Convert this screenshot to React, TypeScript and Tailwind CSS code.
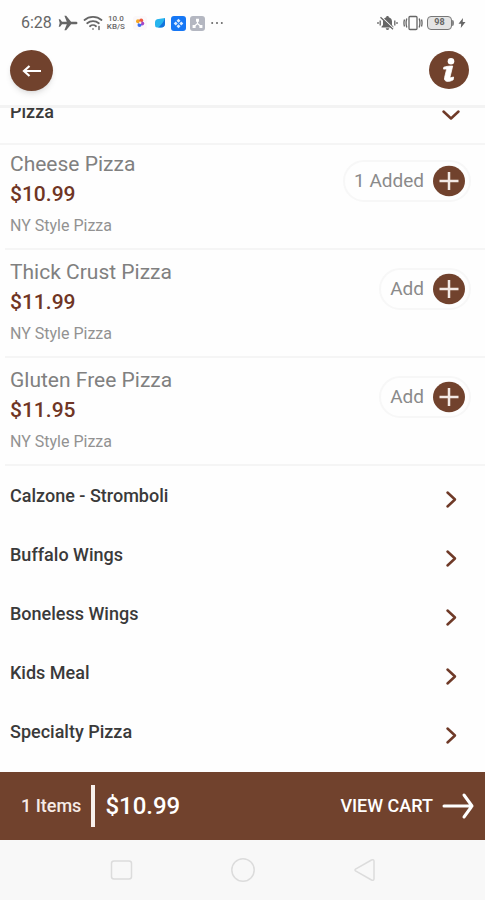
import { useState } from 'react';

interface MenuItem {
  id: number;
  name: string;
  price: string;
  description: string;
  added: number;
}

const pizzas: MenuItem[] = [
  { id: 1, name: 'Cheese Pizza', price: '$10.99', description: 'NY Style Pizza', added: 1 },
  { id: 2, name: 'Thick Crust Pizza', price: '$11.99', description: 'NY Style Pizza', added: 0 },
  { id: 3, name: 'Gluten Free Pizza', price: '$11.95', description: 'NY Style Pizza', added: 0 },
];

const categories = [
  'Calzone - Stromboli',
  'Buffalo Wings',
  'Boneless Wings',
  'Kids Meal',
  'Specialty Pizza',
];

function StatusBar() {
  return (
    <div className="flex h-[46px] items-center justify-between pr-[19px] pl-[21px] text-[#666]">
      <div className="flex items-center">
        <span className="text-base">6:28</span>
        {/* airplane mode */}
        <svg className="ml-[6px] h-4 w-5" viewBox="0 0 20 16" fill="currentColor">
          <path d="M19.5 8c0-.9-.8-1.300-1.800-1.300h-4.600L8.200.8H6.400l2.400 5.900H4L2.100 4.200H.7L1.700 8l-1 3.800h1.400L4 9.300h4.800l-2.400 5.900h1.800l4.900-5.900h4.600c1 0 1.800-.4 1.800-1.300z" />
        </svg>
        {/* wifi */}
        <svg className="ml-[5px] h-4 w-5" viewBox="0 0 20 16" fill="none" stroke="currentColor" strokeWidth="1.800" strokeLinecap="round">
          <path d="M1.500 5C6.200.8 13.800.8 18.500 5M4.200 8.200c3.200-2.800 8.400-2.800 11.600 0M7 11.200c1.600-1.400 4.400-1.400 6 0" />
          <path d="M9.800 14h.4M16 11.500v3" strokeWidth="1.500" />
        </svg>
        <span className="ml-1 flex flex-col items-center text-[8px] leading-2 font-medium">
          <span>10.0</span>
          <span>KB/S</span>
        </span>
        {/* running apps */}
        <svg className="ml-2 h-[14px] w-[14px]" viewBox="0 0 14 14">
          <rect width="14" height="14" rx="3" fill="#fbf8fa" />
          <circle cx="5" cy="5.200" r="2" fill="#f5a623" />
          <circle cx="8.200" cy="4.600" r="2" fill="#f0593e" />
          <circle cx="9.200" cy="7.600" r="2" fill="#a445c8" />
          <circle cx="6.500" cy="9" r="2" fill="#3c6ff0" />
          <circle cx="7.200" cy="6.800" r="1.200" fill="#fff3d0" />
        </svg>
        <svg className="ml-[6px] h-[14px] w-[14px]" viewBox="0 0 14 14">
          <path d="M2 6.500Q2 3 5.500 3L12 2v5.500Q12 11.500 8 11.500H4Q2 11.500 2 9z" fill="#27b5ee" />
          <path d="M12 2v5.500Q12 11.500 8 11.500H5Q10 8 12 2z" fill="#1473dc" />
        </svg>
        <svg className="ml-1 h-[15px] w-[15px]" viewBox="0 0 15 15">
          <rect width="15" height="15" rx="3" fill="#1677f5" />
          <path d="M7.500 2.700l2 2-2 2-2-2zM7.500 8.300l2 2-2 2-2-2zM4.700 5.500l2 2-2 2-2-2zM10.300 5.500l2 2-2 2-2-2z" fill="#dcecff" />
        </svg>
        <svg className="ml-1 h-[15px] w-[15px]" viewBox="0 0 15 15">
          <rect width="15" height="15" rx="3" fill="#b4b7c1" />
          <path d="M7.500 4v3.500L4 10.500M7.500 7.500l3.500 3" stroke="#fff" strokeWidth="1.200" fill="none" />
          <path d="M6 2.800h3v3H6zM2.600 9h3v3h-3zM9.400 9h3v3h-3z" fill="#fff" />
        </svg>
        <svg className="ml-[6px] h-1 w-3" viewBox="0 0 12 4" fill="currentColor">
          <circle cx="1.200" cy="2" r="1" />
          <circle cx="6" cy="2" r="1" />
          <circle cx="10.800" cy="2" r="1" />
        </svg>
      </div>

      <div className="flex items-center">
        {/* muted bell */}
        <svg className="h-4 w-[21px]" viewBox="0 0 21 16">
          <path d="M10.500 1c.8 0 1.300.5 1.300 1.200 2 .6 3.200 2.200 3.200 4.300v3.600l1.500 1.600v.8h-12v-.8L6 10.100V6.500c0-2.100 1.200-3.700 3.200-4.300C9.200 1.500 9.700 1 10.500 1zM8.800 13.300h3.400c0 1-.7 1.700-1.700 1.700s-1.700-.7-1.700-1.700z" fill="currentColor" />
          <path d="M4.500 2l12.500 12" stroke="#fff" strokeWidth="1.200" />
          <path d="M3.500 2.200l12.500 12M1 7v2M3.200 5.500v5M17.800 5.500v5M20 7v2" stroke="currentColor" strokeWidth="1.300" fill="none" />
        </svg>
        {/* vibrate */}
        <svg className="ml-[5px] h-4 w-5" viewBox="0 0 20 16" fill="none" stroke="currentColor" strokeWidth="1.300">
          <rect x="6" y="1.500" width="8" height="13" rx="1" />
          <path d="M3.800 3.500c-.9 2.800-.9 6.200 0 9M16.200 3.500c.9 2.800.9 6.200 0 9M1.500 4.500c-.7 2.200-.7 4.800 0 7M18.500 4.500c.7 2.200.7 4.800 0 7" />
        </svg>
        <div className="ml-1 flex h-[14px] w-[25px] items-center justify-center rounded-[4px] border border-[#777] bg-[#e4e4e4] text-[9px] font-bold">
          98
        </div>
        <span className="h-[6px] w-[2px] rounded-r bg-[#888]" />
        {/* charging */}
        <svg className="ml-1 h-3 w-2" viewBox="0 0 8 12" fill="currentColor">
          <path d="M5 1L.5 6.800h2.700L2.800 11l4.700-5.900H4.700z" />
        </svg>
      </div>
    </div>
  );
}

function Chevron({ open = false }: { open?: boolean }) {
  return (
    <svg
      className="mt-[6px] h-5 w-5 text-[#6f3a28]"
      viewBox="0 0 20 20"
      fill="none"
      stroke="currentColor"
      strokeWidth="2.500"
      strokeLinecap="round"
      strokeLinejoin="round"
    >
      {open ? <path d="M2.500 6.500l7.500 7 7.500-7" /> : <path d="M6.500 3.500l7.500 7-7.500 7" />}
    </svg>
  );
}

function MenuRow({ item, onAdd }: { item: MenuItem; onAdd: () => void }) {
  return (
    <li className="ml-[5px] flex h-[108px] items-start justify-between border-b-2 border-[#f5f5f5] pt-2 pr-[14px] pl-[5px]">
      <div>
        <h3 className="text-[21px] leading-7 text-[#808080]">{item.name}</h3>
        <p className="mt-[2px] text-[21px] leading-7 font-medium text-[#6f3524]">{item.price}</p>
        <p className="mt-1 text-base leading-7 text-[#929292]">{item.description}</p>
      </div>
      <button
        type="button"
        onClick={onAdd}
        className="mt-[10px] flex h-[42px] items-center gap-[9px] rounded-full border-2 border-[#f7f7f7] pr-1 pl-[9px] text-[19px] text-[#8a8a8a]"
      >
        {item.added > 0 ? `${item.added} Added` : 'Add'}
        <svg className="h-8 w-8" viewBox="0 0 32 32">
          <ellipse cx="16" cy="16" rx="16" ry="15.300" fill="#71422d" />
          <path d="M16 7v18M6.500 16h19" stroke="#f3e9e4" strokeWidth="2.500" />
        </svg>
      </button>
    </li>
  );
}

export default function App() {
  const [items, setItems] = useState<MenuItem[]>(pizzas);
  const [open, setOpen] = useState(true);

  const handleAdd = (id: number) => {
    setItems(items.map(item => (item.id === id ? { ...item, added: item.added + 1 } : item)));
  };

  return (
    <div className="flex h-screen flex-col bg-[#fefefe] font-['Roboto',sans-serif]">
      <StatusBar />

      <header className="flex h-[62px] items-start justify-between border-b-3 border-[#f3f3f3] pt-1 pr-4 pl-[10px]">
        <button
          type="button"
          aria-label="Back"
          className="flex h-[41px] w-[43px] items-center justify-center rounded-[50%] bg-[#71422d] shadow-md"
        >
          <svg className="h-5 w-5" viewBox="0 0 20 20" fill="none" stroke="#fff" strokeWidth="2.200">
            <path d="M19 10H2M7.500 5L2 10l5.500 5" />
          </svg>
        </button>
        <button type="button" aria-label="Info">
          <svg className="h-10 w-10" viewBox="0 0 40 40">
            <ellipse cx="20" cy="20" rx="20" ry="19" fill="#71422d" />
            <circle cx="22" cy="11.200" r="3.300" fill="#fff" />
            <path d="M14.800 17.200c2.600-.9 5.800-1.200 8.900-1.200l-2.500 10.300c-.3 1.300.2 1.500 1 1.300l2.400-.6-.4 2.800c-2 1.200-4.200 1.800-5.900 1.600-2.300-.2-3.200-1.700-2.700-3.900l1.800-7.300c.2-.9-.1-1.100-1-1.100h-1.900z" fill="#fff" stroke="#fff" strokeWidth=".8" />
          </svg>
        </button>
      </header>

      <main className="min-h-0 flex-1 overflow-hidden">
        <section>
          <button
            type="button"
            onClick={() => setOpen(!open)}
            className="-mt-7 flex h-[65px] w-full items-center justify-between border-b-2 border-[#f5f5f5] pr-6 pl-[10px] text-lg font-medium text-[#3a3a3a]"
          >
            Pizza
            <Chevron open={open} />
          </button>
          {open && (
            <ul className="-mt-[3px]">
              {items.map(item => (
                <MenuRow key={item.id} item={item} onAdd={() => handleAdd(item.id)} />
              ))}
            </ul>
          )}
        </section>

        {categories.map(category => (
          <button
            key={category}
            type="button"
            className="flex h-[59px] w-full items-center justify-between pr-6 pl-[10px] text-lg font-medium text-[#3a3a3a]"
          >
            {category}
            <Chevron />
          </button>
        ))}
      </main>

      <footer>
        <div className="flex h-[68px] items-center justify-between bg-[#71422d] pr-[11px] pl-[21px] text-white">
          <div className="flex items-center">
            <span className="text-lg font-medium text-[#f6ebe6]">1 Items</span>
            <span className="mx-[10px] h-[42px] w-1 bg-[#f8f0ec]" />
            <span className="text-2xl font-medium">$10.99</span>
          </div>
          <button type="button" className="flex items-center gap-[9px] text-lg font-medium">
            VIEW CART
            <svg className="h-7 w-8" viewBox="0 0 32 28" fill="none" stroke="currentColor" strokeWidth="3" strokeLinecap="round" strokeLinejoin="round">
              <path d="M2 14h28M22 3l8 11-8 11" />
            </svg>
          </button>
        </div>

        <nav className="flex h-[60px] items-center justify-center gap-[98px] bg-[#f8f8f8] text-[#dcdcdc]">
          <button type="button" aria-label="Recent apps">
            <svg className="h-6 w-6" viewBox="0 0 24 24" fill="none" stroke="currentColor" strokeWidth="1.500">
              <rect x="2.500" y="3" width="20" height="18" rx="2.500" />
            </svg>
          </button>
          <button type="button" aria-label="Home">
            <svg className="h-6 w-6" viewBox="0 0 24 24" fill="none" stroke="currentColor" strokeWidth="1.500">
              <circle cx="12" cy="12" r="11.200" />
            </svg>
          </button>
          <button type="button" aria-label="Back">
            <svg className="h-6 w-6" viewBox="0 0 24 24" fill="none" stroke="currentColor" strokeWidth="1.500" strokeLinejoin="round">
              <path d="M2.500 11.200Q1.500 12 2.500 12.800L18.500 22Q21 23 21 20.500V3.500Q21 1 18.500 2z" />
            </svg>
          </button>
        </nav>
      </footer>
    </div>
  );
}
